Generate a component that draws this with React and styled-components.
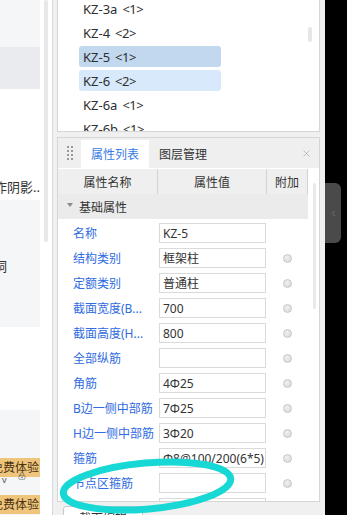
import React from "react";
import styled, { createGlobalStyle } from "styled-components";
import { X, ChevronLeft, LockKeyhole } from "lucide-react";

const GlobalStyle = createGlobalStyle`
  html, body {
    margin: 0;
    padding: 0;
  }
  body {
    width: 347px;
    height: 515px;
    overflow: hidden;
    font-family: "Noto Sans", "Noto Sans CJK SC", sans-serif;
    font-size: 12px;
    color: #333;
  }
`;

const listItems = [
  { name: "KZ-3a", count: 1 },
  { name: "KZ-4", count: 2 },
  { name: "KZ-5", count: 1, state: "selected" },
  { name: "KZ-6", count: 2, state: "hover" },
  { name: "KZ-6a", count: 1 },
  { name: "KZ-6b", count: 1 },
];

const props = [
  { label: "名称", value: "KZ-5" },
  { label: "结构类别", value: "框架柱", radio: true },
  { label: "定额类别", value: "普通柱", radio: true },
  { label: "截面宽度(B...", value: "700", radio: true },
  { label: "截面高度(H...", value: "800", radio: true },
  { label: "全部纵筋", value: "", radio: true },
  { label: "角筋", value: "4Φ25", radio: true },
  { label: "B边一侧中部筋", value: "7Φ25", radio: true },
  { label: "H边一侧中部筋", value: "3Φ20", radio: true },
  { label: "箍筋", value: "Φ8@100/200(6*5)", radio: true },
  { label: "节点区箍筋", value: "", radio: true },
  { label: "箍筋肢数", value: "6*5", radio: true },
];

export default function App() {
  return (
    <Screen>
      <GlobalStyle />
      <LeftStrip>
        <LeftContent>
          <LeftBlock $h={47} $bg="#f5f6f8" />
          <LeftBlock $h={42} $bg="#e9ebef" />
          <LeftBlock $h={111} $bg="#fff" $pt={89}>
            <ClipLeft $shift={19}>制作阴影...</ClipLeft>
          </LeftBlock>
          <LeftBlock $h={127} $bg="#f5f6f8" $pt={57}>
            <ClipLeft $shift={19}>孔洞</ClipLeft>
          </LeftBlock>
          <LeftBlock $h={83} $bg="#fff" />
          <LeftBlock $h={105} $bg="#f5f6f8" $pt={48}>
            <Tag>免费体验</Tag>
            <TagExtra>
              <span>v</span>
              <LockKeyhole size={8} strokeWidth={1.6} />
            </TagExtra>
            <Tag>免费体验</Tag>
          </LeftBlock>
        </LeftContent>
        <LeftScroll />
      </LeftStrip>

      <MainArea>
        <ListBox>
          <ListItems>
            {listItems.map((item) => (
              <ListItem key={item.name} $state={item.state}>
                {item.name}
                <Count>&lt;{item.count}&gt;</Count>
              </ListItem>
            ))}
          </ListItems>
          <ListGutter>
            <ListThumb />
          </ListGutter>
        </ListBox>

        <PropPanel>
          <PanelHeader>
            <Grip>
              {Array.from({ length: 8 }).map((_, i) => (
                <Dot key={i} />
              ))}
            </Grip>
            <Tab $active>属性列表</Tab>
            <Tab>图层管理</Tab>
            <CloseBtn>
              <X size={11} strokeWidth={1.2} />
            </CloseBtn>
          </PanelHeader>
          <PanelBody>
            <Table>
              <ColHeader>
                <HeadCell>属性名称</HeadCell>
                <HeadCell>属性值</HeadCell>
                <HeadCell>附加</HeadCell>
              </ColHeader>
              <GroupRow>
                <Caret />
                基础属性
              </GroupRow>
              {props.map((p) => (
                <PropRow key={p.label}>
                  <Label>{p.label}</Label>
                  <ValueCell>
                    <ValueBox>{p.value}</ValueBox>
                  </ValueCell>
                  <AttachCell>{p.radio && <Radio />}</AttachCell>
                </PropRow>
              ))}
            </Table>
            <BodyGutter>
              <BodyThumb />
            </BodyGutter>
          </PanelBody>
        </PropPanel>

        <EditButton>截面编辑</EditButton>
      </MainArea>

      <DarkSide>
        <Handle>
          <ChevronLeft size={9} strokeWidth={1.3} color="#9a9a9a" />
        </Handle>
      </DarkSide>

      <Annotation width="347" height="515" viewBox="0 0 347 515">
        <ellipse
          cx="147"
          cy="486"
          rx="84"
          ry="23"
          transform="rotate(-5 147 486)"
          fill="none"
          stroke="#18d8d5"
          strokeWidth="7"
        />
      </Annotation>
    </Screen>
  );
}

const Screen = styled.div`
  position: relative;
  display: flex;
  width: 347px;
  height: 515px;
  overflow: hidden;
  background: #fff;
`;

const LeftStrip = styled.div`
  width: 52px;
  flex-shrink: 0;
  display: flex;
  gap: 4px;
  background: #fff;
  border-right: 1px solid #d9d9d9;
`;

const LeftContent = styled.div`
  width: 40px;
  display: flex;
  flex-direction: column;
  overflow: hidden;
`;

const LeftBlock = styled.div`
  height: ${(p) => p.$h}px;
  flex-shrink: 0;
  background: ${(p) => p.$bg};
  padding-top: ${(p) => p.$pt || 0}px;
  box-sizing: border-box;
  display: flex;
  flex-direction: column;
  color: #333;
  font-size: 13px;
  line-height: 18px;
`;

const ClipLeft = styled.div`
  white-space: nowrap;
  margin-left: -${(p) => p.$shift}px;
`;

const Tag = styled.div`
  height: 19px;
  display: flex;
  justify-content: flex-end;
  align-items: center;
  white-space: nowrap;
  overflow: hidden;
  background: #efc57c;
  color: #4a3412;
  font-size: 12px;
  padding-right: 1px;
`;

const TagExtra = styled.div`
  height: 23px;
  display: flex;
  align-items: flex-start;
  gap: 11px;
  padding-left: 2px;
  margin-top: -5px;
  color: #555;
  font-size: 9px;
  line-height: 9px;
  span {
    margin-top: 3px;
  }
`;

const LeftScroll = styled.div`
  width: 4px;
  height: 242px;
  background: #e8e8e8;
  border-radius: 2px;
`;

const MainArea = styled.div`
  width: 272px;
  flex-shrink: 0;
  box-sizing: border-box;
  padding: 0 5px 0 4px;
  background: #f0f0f0;
  display: flex;
  flex-direction: column;
`;

const ListBox = styled.div`
  height: 132px;
  flex-shrink: 0;
  box-sizing: border-box;
  background: #fff;
  border: 1px solid #d6d6d6;
  border-top: none;
  display: flex;
  overflow: hidden;
`;

const ListItems = styled.div`
  flex: 1;
  display: flex;
  flex-direction: column;
  gap: 3px;
  margin-top: -2px;
  padding-left: 21px;
`;

const ListItem = styled.div`
  width: 142px;
  height: 21px;
  flex-shrink: 0;
  box-sizing: border-box;
  padding-left: 4px;
  display: flex;
  align-items: center;
  border-radius: 3px;
  font-size: 13px;
  color: #2e2e2e;
  white-space: nowrap;
  background: ${(p) =>
    p.$state === "selected" ? "#c2d8ef" : p.$state === "hover" ? "#d8e9fb" : "transparent"};
`;

const Count = styled.span`
  margin-left: 5px;
  font-size: 13px;
  letter-spacing: -0.5px;
`;

const ListGutter = styled.div`
  width: 11px;
`;

const ListThumb = styled.div`
  width: 4px;
  height: 15px;
  margin-top: 27px;
  background: #e6e6e6;
  border-radius: 2px;
`;

const PropPanel = styled.div`
  margin-top: 5px;
  height: 365px;
  flex-shrink: 0;
  box-sizing: border-box;
  border: 1px solid #d6d6d6;
  background: #fff;
  display: flex;
  flex-direction: column;
  overflow: hidden;
`;

const PanelHeader = styled.div`
  height: 30px;
  flex-shrink: 0;
  box-sizing: border-box;
  padding-top: 2px;
  background: #efefef;
  display: flex;
  align-items: stretch;
`;

const Grip = styled.div`
  width: 23px;
  display: grid;
  grid-template-columns: 2px 2px;
  grid-auto-rows: 2px;
  column-gap: 2px;
  row-gap: 2px;
  align-content: center;
  justify-content: center;
  padding-bottom: 2px;
`;

const Dot = styled.span`
  width: 2px;
  height: 2px;
  background: #9a9a9a;
`;

const Tab = styled.div`
  padding: 0 10px;
  display: flex;
  align-items: center;
  font-size: 12px;
  background: ${(p) => (p.$active ? "#fff" : "transparent")};
  color: ${(p) => (p.$active ? "#3a7ae2" : "#333")};
`;

const CloseBtn = styled.div`
  margin-left: auto;
  width: 26px;
  display: flex;
  align-items: center;
  justify-content: center;
  color: #999;
  padding-bottom: 2px;
`;

const PanelBody = styled.div`
  flex: 1;
  display: flex;
  overflow: hidden;
  border-top: 1px solid #fff;
`;

const Table = styled.div`
  width: 250px;
  display: flex;
  flex-direction: column;
`;

const ColHeader = styled.div`
  height: 25px;
  flex-shrink: 0;
  display: grid;
  grid-template-columns: 100px 109px 41px;
  background: #efefef;
`;

const HeadCell = styled.div`
  display: flex;
  align-items: center;
  justify-content: center;
  border-right: 1px solid #d2d2d2;
  font-size: 12px;
  color: #333;
`;

const GroupRow = styled.div`
  height: 25px;
  flex-shrink: 0;
  display: flex;
  align-items: center;
  gap: 6px;
  padding-left: 9px;
  background: #ebebeb;
  font-size: 12px;
  color: #333;
`;

const Caret = styled.span`
  width: 0;
  height: 0;
  border-left: 3px solid transparent;
  border-right: 3px solid transparent;
  border-top: 4px solid #8a8a8a;
  margin-top: -3px;
`;

const PropRow = styled.div`
  height: 25px;
  flex-shrink: 0;
  display: grid;
  grid-template-columns: 100px 109px 41px;
`;

const Label = styled.div`
  padding-left: 15px;
  padding-top: 4px;
  height: 20px;
  display: flex;
  align-items: center;
  white-space: nowrap;
  overflow: hidden;
  color: #2f6be2;
  font-size: 12px;
`;

const ValueCell = styled.div`
  padding: 4px 0 0 1px;
`;

const ValueBox = styled.div`
  width: 107px;
  height: 20px;
  box-sizing: border-box;
  border: 1px solid #dadada;
  padding-left: 3px;
  display: flex;
  align-items: center;
  white-space: nowrap;
  overflow: hidden;
  font-size: 12px;
  color: #333;
`;

const AttachCell = styled.div`
  padding-top: 4px;
  height: 20px;
  display: flex;
  align-items: center;
  justify-content: center;
`;

const Radio = styled.span`
  width: 9px;
  height: 9px;
  box-sizing: border-box;
  border-radius: 50%;
  border: 1px solid #c8c8c8;
  background: radial-gradient(circle at 40% 35%, #f0f0f0, #d6d6d6);
`;

const BodyGutter = styled.div`
  width: 11px;
  padding-left: 5px;
  box-sizing: border-box;
`;

const BodyThumb = styled.div`
  width: 3px;
  height: 126px;
  margin-top: 14px;
  background: #e9e9e9;
  border-radius: 2px;
`;

const EditButton = styled.div`
  margin: 4px 0 0 6px;
  width: 80px;
  height: 24px;
  flex-shrink: 0;
  box-sizing: border-box;
  border: 1px solid #c8c8c8;
  border-radius: 3px;
  background: #fff;
  display: flex;
  align-items: center;
  justify-content: center;
  font-size: 12px;
  color: #333;
`;

const DarkSide = styled.div`
  flex: 1;
  background: #000;
  display: flex;
  flex-direction: column;
`;

const Handle = styled.div`
  margin-top: 183px;
  width: 16px;
  height: 60px;
  background: #4a4a4a;
  border-radius: 0 6px 6px 0;
  display: flex;
  align-items: center;
  justify-content: center;
`;

const Annotation = styled.svg`
  position: absolute;
  left: 0;
  top: 0;
  pointer-events: none;
`;
